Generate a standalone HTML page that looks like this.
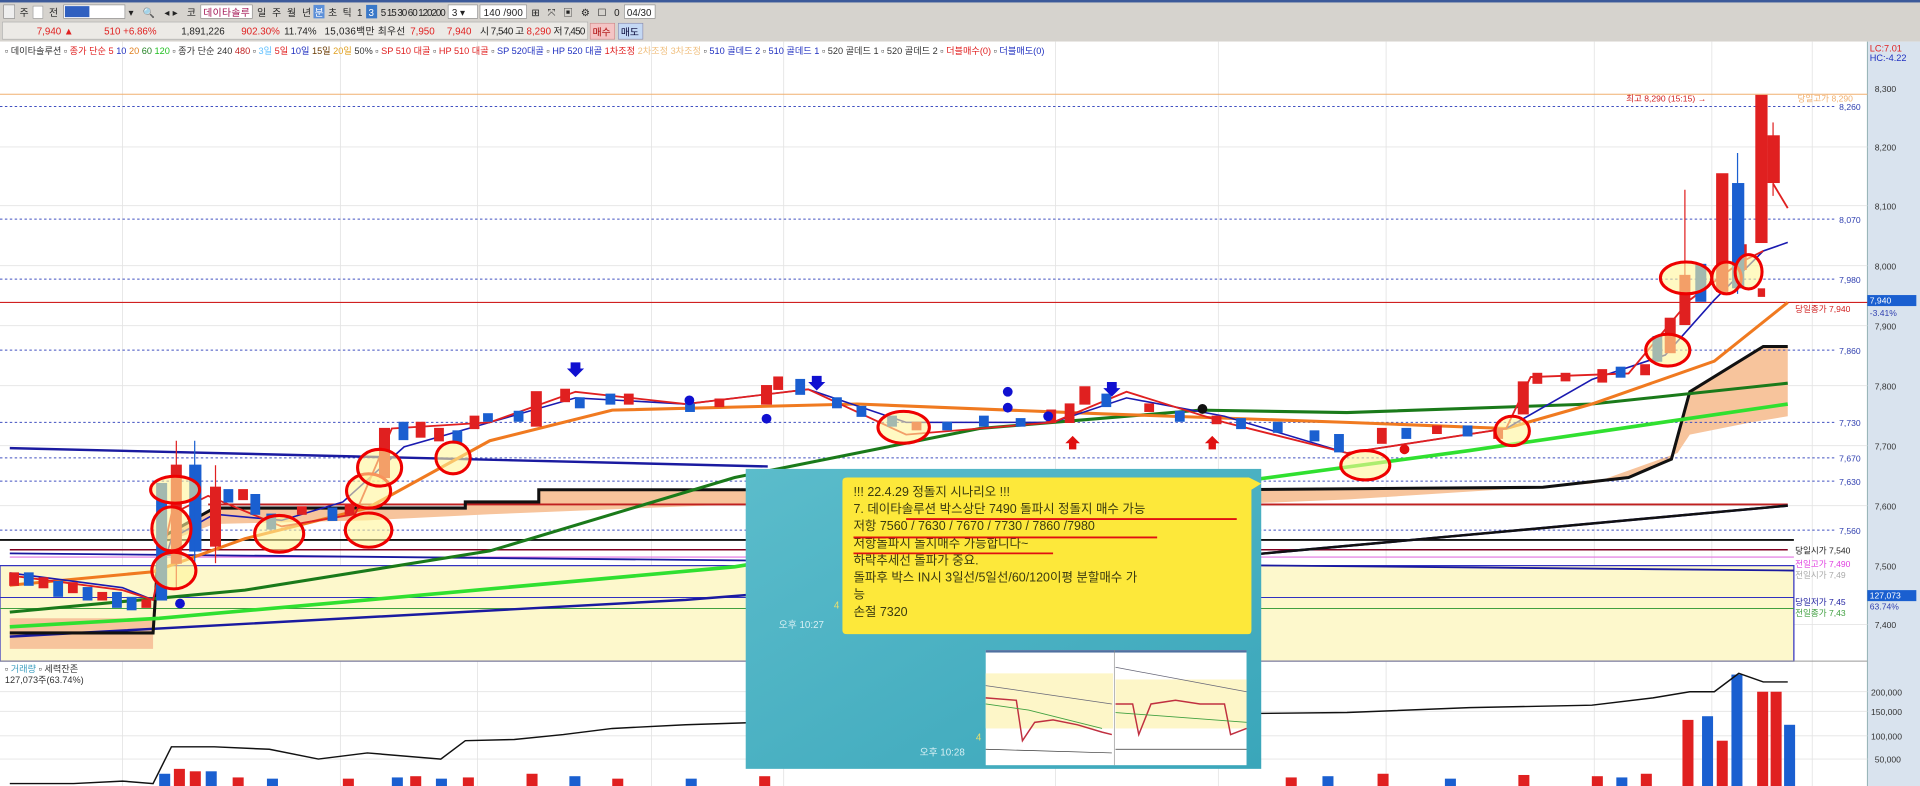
<!DOCTYPE html>
<html><head><meta charset="utf-8"><style>
html,body{margin:0;padding:0;background:#fff;overflow:hidden}
svg{display:block}
text{font-family:"Liberation Sans","Noto Sans CJK KR",sans-serif}
</style></head><body>
<svg width="1920" height="786" viewBox="0 0 1568 642" preserveAspectRatio="none" xmlns="http://www.w3.org/2000/svg">
<rect x="0" y="0" width="1568" height="34" fill="#d6d3ce"/>
<rect x="0" y="0" width="1568" height="2" fill="#3c5a9a"/>
<g font-size="8" fill="#222">
<rect x="3" y="4" width="9" height="11" fill="#eee" stroke="#888" stroke-width=".5"/>
<text x="16" y="13">주</text><rect x="27" y="5" width="8" height="10" fill="#fff" stroke="#999" stroke-width=".5"/>
<text x="40" y="13">전</text>
<rect x="52" y="4" width="50" height="11" fill="#fff" stroke="#888" stroke-width=".5"/><rect x="53" y="5" width="20" height="9" fill="#3060c0"/>
<text x="105" y="13" textLength="55">▾ 🔍 ◂▸ 코</text>
<rect x="164" y="4" width="42" height="11" fill="#fff" stroke="#888" stroke-width=".5"/><text x="166" y="13" fill="#a01050" textLength="38">데이타솔루</text>
<text x="210" y="13" textLength="44">일 주 월 년</text><rect x="256" y="4" width="9" height="11" fill="#5b8fd8"/><text x="257" y="13" fill="#fff">분</text>
<text x="268" y="13" textLength="28">초 틱  1</text><rect x="299" y="4" width="9" height="11" fill="#3a78c8"/><text x="301" y="13" fill="#fff">3</text>
<text x="311" y="13" textLength="53">5  15 30 60 120200</text>
<rect x="366" y="4" width="24" height="11" fill="#fff" stroke="#888" stroke-width=".5"/><text x="369" y="13">3  ▾</text>
<rect x="392" y="4" width="38" height="11" fill="#fff" stroke="#888" stroke-width=".5"/><text x="395" y="13" textLength="32">140 /900</text>
<text x="434" y="13" textLength="72">⊞ ⤧ ▣ ⚙ ☐ 0</text>
<rect x="510" y="4" width="25" height="11" fill="#fff" stroke="#888" stroke-width=".5"/><text x="512" y="13" textLength="20">04/30</text>
<rect x="2" y="18" width="478" height="14" fill="#eceae6" stroke="#aaa" stroke-width=".5"/>
<text x="30" y="28" fill="#e02020">7,940 ▲</text><text x="85" y="28" fill="#e02020">510  +6.86%</text>
<text x="148" y="28">1,891,226</text><text x="197" y="28" fill="#e02020">902.30%</text><text x="232" y="28">11.74%</text>
<text x="265" y="28" textLength="66">15,036백만 최우선</text><text x="335" y="28" fill="#e02020">7,950</text><text x="365" y="28" fill="#e02020">7,940</text>
<text x="392" y="28" textLength="36">시 7,540  고</text><text x="430" y="28" fill="#e02020">8,290</text><text x="452" y="28" textLength="26">저 7,450</text>
<rect x="482" y="19" width="20" height="13" fill="#f4c4c4" stroke="#c88" stroke-width=".5"/><text x="484" y="29" fill="#a00">매수</text>
<rect x="505" y="19" width="20" height="13" fill="#c4d8f4" stroke="#88a" stroke-width=".5"/><text x="507" y="29" fill="#003">매도</text>
</g>
<rect x="0" y="34" width="1525" height="608" fill="#fff"/>
<rect x="1525" y="34" width="43" height="608" fill="#d9e3ee"/>
<line x1="1525" y1="34" x2="1525" y2="642" stroke="#8aa" stroke-width=".7"/>
<g stroke="#e4e4e4" stroke-width=".7">
<line x1="100" y1="34" x2="100" y2="642"/><line x1="278" y1="34" x2="278" y2="642"/><line x1="390" y1="34" x2="390" y2="642"/><line x1="532" y1="34" x2="532" y2="642"/><line x1="640" y1="34" x2="640" y2="642"/><line x1="862" y1="34" x2="862" y2="642"/><line x1="995" y1="34" x2="995" y2="642"/><line x1="1132" y1="34" x2="1132" y2="642"/><line x1="1302" y1="34" x2="1302" y2="642"/><line x1="1398" y1="34" x2="1398" y2="642"/><line x1="1480" y1="34" x2="1480" y2="642"/>
<line x1="0" y1="120" x2="1525" y2="120"/><line x1="0" y1="168" x2="1525" y2="168"/><line x1="0" y1="217" x2="1525" y2="217"/><line x1="0" y1="266" x2="1525" y2="266"/><line x1="0" y1="315" x2="1525" y2="315"/><line x1="0" y1="364" x2="1525" y2="364"/><line x1="0" y1="413" x2="1525" y2="413"/><line x1="0" y1="510" x2="1525" y2="510"/>
<line x1="0" y1="565" x2="1525" y2="565"/><line x1="0" y1="581" x2="1525" y2="581"/><line x1="0" y1="601" x2="1525" y2="601"/><line x1="0" y1="620" x2="1525" y2="620"/>
</g>
<g font-size="7.5">
<text x="4" y="44" fill="#333">▫ 데이타솔루션 ▫ <tspan fill="#e02020">종가 단순 5</tspan> <tspan fill="#2030c0">10</tspan> <tspan fill="#e08020">20</tspan> <tspan fill="#208020">60</tspan> <tspan fill="#20c020">120</tspan> ▫ 종가 단순 240 <tspan fill="#c02020">480</tspan> ▫ <tspan fill="#60c0ff">3일</tspan> <tspan fill="#e02020">5일</tspan> <tspan fill="#2030c0">10일</tspan> <tspan fill="#6a3a00">15일</tspan> <tspan fill="#e0a020">20일</tspan> 50% ▫ <tspan fill="#e02020">SP 510 대골</tspan> ▫ <tspan fill="#e02020">HP 510 대골</tspan> ▫ <tspan fill="#2030c0">SP 520대골</tspan> ▫ <tspan fill="#2030c0">HP 520 대골</tspan> <tspan fill="#e02020">1차조정</tspan> <tspan fill="#f0c080">2차조정 3차조정</tspan> ▫ <tspan fill="#2030c0">510 골데드 2</tspan> ▫ <tspan fill="#2030c0">510 골데드 1</tspan> ▫ 520 골데드 1 ▫ 520 골데드 2 ▫ <tspan fill="#e02020">더블매수(0)</tspan> ▫ <tspan fill="#2030c0">더블매도(0)</tspan></text>
<text x="1527" y="42" fill="#e02020">LC:7.01</text><text x="1527" y="50" fill="#2030c0">HC:-4.22</text>
</g>
<rect x="0" y="462" width="1465" height="78" fill="#fdf8cc"/>
<rect x="0" y="462" width="1465" height="78" fill="none" stroke="#3030c0" stroke-width="1"/>
<path d="M8 505 L125 505 L125 530 L8 530Z" fill="#f7c49c"/>
<path d="M130 440 L175 415 L380 415 L380 410 L440 410 L440 400 L1000 400 L1260 398 L1330 390 L1365 375 L1380 320 L1440 283 L1460 283 L1460 340 L1430 345 L1380 355 L1370 370 L1300 395 L1100 408 L1000 412 L600 412 L400 420 L300 425 L175 428 L130 445Z" fill="#f7c49c"/>
<line x1="0" y1="77" x2="1525" y2="77" stroke="#f0b070" stroke-width=".8"/>
<g stroke="#4050c0" stroke-width=".8" stroke-dasharray="2,2">
<line x1="0" y1="87" x2="1500" y2="87"/><line x1="0" y1="179" x2="1500" y2="179"/><line x1="0" y1="228" x2="1500" y2="228"/><line x1="0" y1="286" x2="1500" y2="286"/><line x1="0" y1="345" x2="1500" y2="345"/><line x1="0" y1="374" x2="1500" y2="374"/><line x1="0" y1="393" x2="1500" y2="393"/><line x1="0" y1="433" x2="1500" y2="433"/>
</g>
<line x1="0" y1="247" x2="1525" y2="247" stroke="#d02020" stroke-width=".9"/>
<line x1="170" y1="412" x2="1460" y2="412" stroke="#c02020" stroke-width="1.5"/>
<line x1="0" y1="441" x2="1465" y2="441" stroke="#111" stroke-width="1.5"/>
<line x1="8" y1="449" x2="1460" y2="449" stroke="#800020" stroke-width="1.2"/>
<line x1="8" y1="455" x2="1465" y2="455" stroke="#e070e0" stroke-width="1"/>
<line x1="0" y1="488" x2="1465" y2="488" stroke="#3030c0" stroke-width=".8"/>
<line x1="0" y1="497" x2="1465" y2="497" stroke="#40a040" stroke-width=".8"/>
<line x1="8" y1="366" x2="627" y2="381" stroke="#1a1aa0" stroke-width="2"/>
<line x1="8" y1="452" x2="1465" y2="466" stroke="#1a1aa0" stroke-width="1.5"/>
<path d="M8 520 L560 490 L1000 455 L1460 413" fill="none" stroke="#1a1aa0" stroke-width="2"/>
<path d="M1000 455 L1460 413" fill="none" stroke="#111" stroke-width="2"/>
<path d="M8 517 L125 517 L130 440 L175 415 L380 415 L380 410 L440 410 L440 400 L1000 400 L1260 398 L1330 390 L1365 375 L1380 320 L1440 283 L1460 283" fill="none" stroke="#111" stroke-width="2.5"/>
<path d="M8 512 L130 505 L300 490 L600 463 L800 430 L1000 395 L1200 368 L1460 330" fill="none" stroke="#30e030" stroke-width="3"/>
<path d="M8 500 L200 482 L400 450 L600 390 L800 350 L980 335 L1100 337 L1300 330 L1460 313" fill="none" stroke="#1a7a1a" stroke-width="2.5"/>
<path d="M8 478 L125 467 L200 440 L300 415 L400 360 L500 335 L700 330 L900 338 L1100 345 L1230 350 L1300 330 L1400 295 L1460 247" fill="none" stroke="#f07a20" stroke-width="2.5"/>
<path d="M8 468 L100 480 L125 490 L140 440 L175 420 L230 425 L280 410 L330 365 L400 345 L470 325 L560 330 L660 318 L740 345 L860 345 L920 325 L1000 340 L1100 370 L1230 350 L1300 310 L1360 290 L1400 245 L1440 205 L1460 198" fill="none" stroke="#1a1ab0" stroke-width="1.3"/>
<path d="M8 470 L100 482 L125 490 L140 420 L170 405 L230 430 L290 420 L320 350 L400 345 L470 320 L560 330 L660 318 L740 355 L860 345 L920 320 L1000 345 L1100 370 L1230 350 L1250 308 L1330 305 L1380 245 L1420 215 L1440 205" fill="none" stroke="#e02020" stroke-width="1.5"/>
<g stroke-width="1">
<g fill="#e02020" stroke="#e02020">
<rect x="8" y="468" width="7" height="10"/><rect x="32" y="472" width="7" height="8"/><rect x="56" y="476" width="7" height="8"/><rect x="80" y="484" width="7" height="6"/><rect x="116" y="490" width="7" height="6"/>
<rect x="140" y="380" width="8" height="80"/><line x1="144" y1="360" x2="144" y2="480"/>
<rect x="172" y="398" width="8" height="48"/><line x1="176" y1="380" x2="176" y2="460"/>
<rect x="195" y="400" width="7" height="8"/><rect x="243" y="414" width="7" height="6"/><rect x="282" y="412" width="7" height="8"/>
<rect x="310" y="350" width="8" height="40"/><rect x="340" y="345" width="7" height="12"/><rect x="355" y="350" width="7" height="10"/>
<rect x="384" y="340" width="7" height="10"/><rect x="434" y="320" width="8" height="28"/><rect x="458" y="318" width="7" height="10"/>
<rect x="510" y="322" width="7" height="8"/><rect x="584" y="326" width="7" height="6"/><rect x="622" y="315" width="8" height="15"/><rect x="632" y="308" width="7" height="10"/>
<rect x="745" y="345" width="7" height="6"/><rect x="855" y="335" width="7" height="10"/><rect x="870" y="330" width="7" height="15"/><rect x="882" y="316" width="8" height="14"/>
<rect x="935" y="330" width="7" height="6"/><rect x="990" y="340" width="7" height="6"/><rect x="1125" y="350" width="7" height="12"/><rect x="1170" y="348" width="7" height="6"/>
<rect x="1220" y="350" width="7" height="8"/><rect x="1240" y="312" width="8" height="26"/><rect x="1252" y="305" width="7" height="8"/><rect x="1275" y="305" width="7" height="6"/><rect x="1305" y="302" width="7" height="10"/>
<rect x="1340" y="298" width="7" height="8"/><rect x="1350" y="278" width="7" height="12"/><rect x="1360" y="260" width="8" height="28"/><rect x="1372" y="225" width="8" height="40"/><line x1="1376" y1="155" x2="1376" y2="265"/>
<rect x="1402" y="142" width="9" height="96"/><rect x="1418" y="200" width="8" height="20"/><rect x="1434" y="78" width="9" height="120"/><rect x="1444" y="111" width="9" height="38"/><line x1="1448" y1="100" x2="1448" y2="160"/>
<rect x="1436" y="236" width="5" height="6"/><path d="M1448 150 L1460 170" stroke-width="1.5" fill="none"/>
</g>
<g fill="#1a5fd0" stroke="#1a5fd0">
<rect x="20" y="468" width="7" height="10"/><rect x="44" y="475" width="7" height="12"/><rect x="68" y="480" width="7" height="10"/><rect x="92" y="484" width="7" height="12"/><rect x="104" y="488" width="7" height="10"/>
<rect x="128" y="395" width="8" height="95"/><rect x="155" y="380" width="9" height="70"/><line x1="159" y1="360" x2="159" y2="460"/>
<rect x="183" y="400" width="7" height="10"/><rect x="205" y="404" width="7" height="16"/><rect x="218" y="420" width="7" height="12"/><rect x="268" y="415" width="7" height="10"/>
<rect x="326" y="345" width="7" height="14"/><rect x="370" y="352" width="7" height="10"/><rect x="395" y="338" width="7" height="6"/><rect x="420" y="336" width="7" height="8"/>
<rect x="470" y="325" width="7" height="8"/><rect x="495" y="322" width="7" height="8"/><rect x="560" y="330" width="7" height="6"/><rect x="650" y="310" width="7" height="12"/><rect x="680" y="325" width="7" height="8"/>
<rect x="700" y="332" width="7" height="8"/><rect x="725" y="340" width="7" height="8"/><rect x="770" y="345" width="7" height="6"/><rect x="800" y="340" width="7" height="8"/><rect x="830" y="342" width="7" height="6"/>
<rect x="900" y="322" width="7" height="10"/><rect x="960" y="336" width="7" height="8"/><rect x="1010" y="342" width="7" height="8"/><rect x="1040" y="345" width="7" height="8"/><rect x="1070" y="352" width="7" height="8"/><rect x="1090" y="355" width="7" height="14"/>
<rect x="1145" y="350" width="7" height="8"/><rect x="1195" y="348" width="7" height="8"/><rect x="1320" y="300" width="7" height="8"/><rect x="1350" y="275" width="7" height="20"/>
<rect x="1385" y="216" width="8" height="30"/><rect x="1415" y="150" width="9" height="85"/><line x1="1419" y1="125" x2="1419" y2="240"/>
</g>
</g>
<g fill="#fff59a" fill-opacity=".6" stroke="#e00" stroke-width="2.5">
<ellipse cx="143" cy="400" rx="20" ry="11"/><ellipse cx="140" cy="432" rx="16" ry="18"/><ellipse cx="142" cy="466" rx="18" ry="15"/>
<ellipse cx="228" cy="436" rx="20" ry="15"/><ellipse cx="301" cy="433" rx="19" ry="14"/><ellipse cx="301" cy="401" rx="18" ry="14"/><ellipse cx="310" cy="382" rx="18" ry="15"/>
<ellipse cx="370" cy="374" rx="14" ry="13"/><ellipse cx="738" cy="349" rx="21" ry="13"/><ellipse cx="1115" cy="380" rx="20" ry="12"/>
<ellipse cx="1235" cy="352" rx="14" ry="12"/><ellipse cx="1362" cy="286" rx="18" ry="13"/><ellipse cx="1377" cy="227" rx="21" ry="13"/><ellipse cx="1410" cy="227" rx="12" ry="13"/><ellipse cx="1428" cy="222" rx="11" ry="14"/>
</g>
<g fill="#1010d0"><circle cx="147" cy="493" r="4"/><circle cx="563" cy="327" r="4"/><circle cx="626" cy="342" r="4"/><circle cx="823" cy="320" r="4"/><circle cx="823" cy="333" r="4"/><circle cx="856" cy="340" r="4"/>
<path d="M466 296 h8 v5 h3 l-7 7 l-7 -7 h3z"/><path d="M663 307 h8 v5 h3 l-7 7 l-7 -7 h3z"/><path d="M904 312 h8 v5 h3 l-7 7 l-7 -7 h3z"/></g>
<g fill="#e01010"><path d="M876 356 l-6 6 h3 v5 h6 v-5 h3z"/><path d="M990 356 l-6 6 h3 v5 h6 v-5 h3z"/><circle cx="1147" cy="367" r="4"/></g>
<circle cx="982" cy="334" r="4" fill="#111"/>
<g font-size="7">
<text x="1328" y="83" fill="#d02020">최고 8,290 (15:15) →</text>
<text x="1468" y="83" fill="#f0b070">당일고가 8,290</text>
<text x="1466" y="255" fill="#d02020">당일종가 7,940</text>
<text x="1466" y="452" fill="#222">당일시가 7,540</text>
<text x="1466" y="463" fill="#e040e0">전일고가 7,490</text>
<text x="1466" y="472" fill="#aaa">전일시가 7,49</text>
<text x="1466" y="494" fill="#2020a0">당일저가 7,45</text>
<text x="1466" y="503" fill="#40a040">전일종가 7,43</text>
<g fill="#3040b0"><text x="1502" y="90">8,260</text><text x="1502" y="182">8,070</text><text x="1502" y="231">7,980</text><text x="1502" y="289">7,860</text><text x="1502" y="348">7,730</text><text x="1502" y="377">7,670</text><text x="1502" y="396">7,630</text><text x="1502" y="436">7,560</text></g>
<g fill="#333"><text x="1531" y="75">8,300</text><text x="1531" y="123">8,200</text><text x="1531" y="171">8,100</text><text x="1531" y="220">8,000</text><text x="1531" y="269">7,900</text><text x="1531" y="318">7,800</text><text x="1531" y="367">7,700</text><text x="1531" y="416">7,600</text><text x="1531" y="465">7,500</text><text x="1531" y="513">7,400</text>
<text x="1528" y="568">200,000</text><text x="1528" y="584">150,000</text><text x="1528" y="604">100,000</text><text x="1531" y="623">50,000</text></g>
<rect x="1525" y="241" width="40" height="9" fill="#1a5fd0"/><text x="1527" y="248" fill="#fff">7,940</text><text x="1527" y="258" fill="#3040b0">-3.41%</text>
<rect x="1525" y="482" width="40" height="9" fill="#1a5fd0"/><text x="1527" y="489" fill="#fff">127,073</text><text x="1527" y="498" fill="#3040b0">63.74%</text>
</g>
<line x1="0" y1="540" x2="1525" y2="540" stroke="#999" stroke-width=".8"/>
<text x="4" y="549" font-size="7.5" fill="#333">▫ <tspan fill="#40a0c0">거래량</tspan> ▫ 세력잔존</text>
<text x="4" y="558" font-size="7.5" fill="#333">127,073주(63.74%)</text>
<g fill="#e02020"><rect x="142" y="628" width="9" height="14"/><rect x="155" y="630" width="9" height="12"/><rect x="190" y="635" width="9" height="7"/><rect x="280" y="636" width="9" height="6"/><rect x="335" y="634" width="9" height="8"/><rect x="378" y="635" width="9" height="7"/><rect x="430" y="632" width="9" height="10"/><rect x="500" y="636" width="9" height="6"/><rect x="620" y="634" width="9" height="8"/><rect x="1050" y="635" width="9" height="7"/><rect x="1125" y="632" width="9" height="10"/><rect x="1240" y="633" width="9" height="9"/><rect x="1300" y="634" width="9" height="8"/><rect x="1340" y="632" width="9" height="10"/><rect x="1374" y="588" width="9" height="54"/><rect x="1402" y="605" width="9" height="37"/><rect x="1435" y="565" width="9" height="77"/><rect x="1446" y="565" width="9" height="77"/></g>
<g fill="#1a5fd0"><rect x="130" y="632" width="9" height="10"/><rect x="168" y="630" width="9" height="12"/><rect x="218" y="636" width="9" height="6"/><rect x="320" y="635" width="9" height="7"/><rect x="356" y="636" width="9" height="6"/><rect x="465" y="634" width="9" height="8"/><rect x="560" y="636" width="9" height="6"/><rect x="1080" y="634" width="9" height="8"/><rect x="1180" y="636" width="9" height="6"/><rect x="1320" y="635" width="9" height="7"/><rect x="1390" y="585" width="9" height="57"/><rect x="1414" y="551" width="9" height="91"/><rect x="1457" y="592" width="9" height="50"/></g>
<path d="M8 640 L60 640 L100 638 L125 640 L140 610 L175 610 L220 612 L260 620 L300 615 L360 620 L380 605 L420 604 L460 600 L500 595 L560 592 L620 590 L680 589 L740 588 L800 585 L1100 582 L1200 578 L1300 576 L1350 570 L1380 565 L1400 565 L1420 550 L1440 557 L1460 557" fill="none" stroke="#111" stroke-width="1.2"/>
<defs><linearGradient id="tg" x1="0" y1="0" x2="1" y2="1"><stop offset="0" stop-color="#5bbccb"/><stop offset="1" stop-color="#3aa6ba"/></linearGradient></defs>
<rect x="609" y="383" width="421" height="245" fill="url(#tg)"/>
<path d="M692 390 H1020 L1030 395 L1022 400 V515 Q1022 518 1019 518 H692 Q688 518 688 515 V393 Q688 390 692 390Z" fill="#fde83a"/>
<g font-size="10.2" fill="#3a3a10">
<text x="697" y="405">!!! 22.4.29 정돌지 시나리오 !!!</text>
<text x="697" y="419">7. 데이타솔루션 박스상단 7490 돌파시 정돌지 매수 가능</text>
<text x="697" y="433">저항 7560 / 7630 / 7670 / 7730 / 7860 /7980</text>
<text x="697" y="447">저항돌파시 돌지매수 가능합니다~</text>
<text x="697" y="461">하락추세선 돌파가 중요.</text>
<text x="697" y="475">돌파후 박스 IN시 3일선/5일선/60/120이평 분할매수 가</text>
<text x="697" y="489">능</text>
<text x="697" y="503">손절 7320</text>
</g>
<g stroke="#e01010" stroke-width="1.5"><line x1="740" y1="424" x2="1010" y2="424"/><line x1="697" y1="439" x2="945" y2="439"/><line x1="697" y1="452" x2="860" y2="452"/></g>
<text x="681" y="497" font-size="8" fill="#e8e070">4</text><text x="636" y="513" font-size="8" fill="#d8f0f4">오후 10:27</text>
<text x="797" y="605" font-size="8" fill="#e8e070">4</text><text x="751" y="617" font-size="8" fill="#d8f0f4">오후 10:28</text>
<rect x="805" y="531" width="213" height="94" fill="#fff"/>
<rect x="805" y="531" width="213" height="2" fill="#5070a0"/>
<rect x="805" y="550" width="104" height="45" fill="#fdf6c8"/><rect x="911" y="555" width="107" height="40" fill="#fdf6c8"/>
<line x1="910" y1="531" x2="910" y2="625" stroke="#888" stroke-width=".5"/>
<path d="M805 560 L908 575 M911 545 L1018 565" stroke="#667" stroke-width=".6" fill="none"/>
<path d="M805 570 L830 572 L835 605 L845 590 L860 588 L880 592 L900 598 L908 600 M911 575 L925 575 L930 600 L940 575 L960 572 L980 575 L1000 575 L1005 600 L1018 595" stroke="#c03040" stroke-width="1.2" fill="none"/>
<path d="M805 575 L840 580 L900 595 M911 582 L1018 590" stroke="#40a040" stroke-width=".7" fill="none"/>
<path d="M805 612 L908 615 M911 612 L1018 612" stroke="#333" stroke-width=".6" fill="none"/>
</svg>
</body></html>
